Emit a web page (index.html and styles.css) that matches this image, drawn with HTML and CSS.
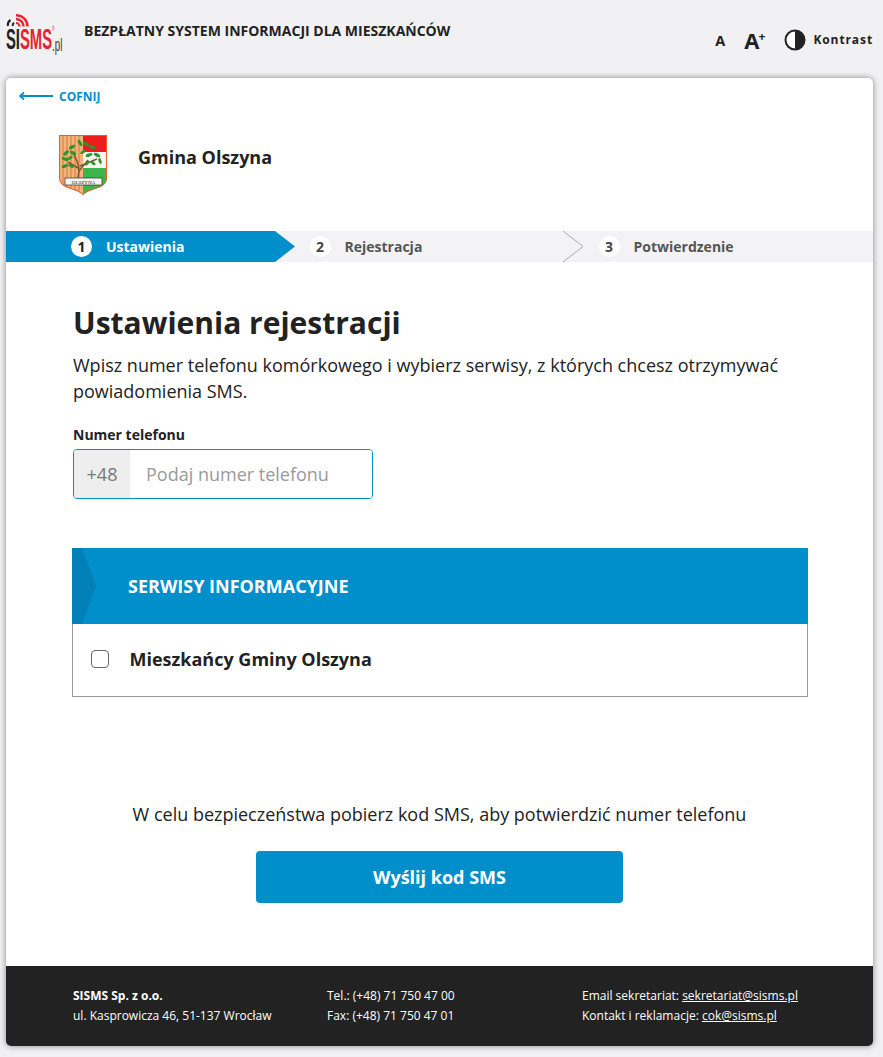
FILE: index.html
```html
<!DOCTYPE html>
<html lang="pl">
<head>
<meta charset="utf-8">
<title>SISMS</title>
<link rel="stylesheet" href="styles.css">
</head>
<body>
<header class="top">
  <div class="logo">
    <svg class="logo-waves" width="24" height="13" viewBox="0 0 24 13">
      <path d="M10 1.200A11 11 0 0 1 21.500 12.500" fill="none" stroke="#e5262e" stroke-width="2.400"/>
      <path d="M10 5A7.500 7.500 0 0 1 17.500 12.500" fill="none" stroke="#e5262e" stroke-width="2.400"/>
      <path d="M10 9A3.500 3.500 0 0 1 13.500 12.500" fill="none" stroke="#e5262e" stroke-width="2.200"/>
      <path d="M2 12A6 6 0 0 1 4.500 6" fill="none" stroke="#222" stroke-width="2.200"/>
      <path d="M6.800 12A3 3 0 0 1 8 8.800" fill="none" stroke="#222" stroke-width="2"/>
    </svg>
    <div class="logo-text"><span class="logo-si">SI</span><span class="logo-sms">SMS<sup class="logo-r">®</sup></span><span class="logo-pl">.pl</span></div>
  </div>
  <div class="top-title">BEZPŁATNY SYSTEM INFORMACJI DLA MIESZKAŃCÓW</div>
  <div class="tools">
    <span class="font-a">A</span>
    <span class="font-b">A<sup>+</sup></span>
    <svg class="contrast" width="22" height="22" viewBox="0 0 22 22">
      <circle cx="11" cy="11" r="9.500" fill="#fff" stroke="#222" stroke-width="2"/>
      <path d="M11 1.500A9.500 9.500 0 0 1 11 20.500Z" fill="#222"/>
    </svg>
    <span class="contrast-label">Kontrast</span>
  </div>
</header>

<main class="card">
  <a class="back" href="#">
    <svg width="34" height="8" viewBox="0 0 34 8"><path d="M34 4H1.500M5 .6 1.200 4 5 7.400" fill="none" stroke="#008fcb" stroke-width="2"/></svg>
    COFNIJ
  </a>
  <div class="org">
    <svg class="crest" width="48" height="60" viewBox="0 0 48 60">
      <defs><clipPath id="sh"><path d="M0 0H48V43Q48 51 36 54Q28 56 24 60Q20 56 12 54Q0 51 0 43Z"/></clipPath></defs>
      <g clip-path="url(#sh)">
        <rect width="24" height="60" fill="#f3b27a"/>
        <path d="M4 0V60M8 0V60M12 0V60M16 0V60M20 0V60" stroke="#d98a48" stroke-width="1.300"/>
        <rect x="24" width="24" height="17" fill="#ee1c1c"/>
        <rect x="24" y="17" width="24" height="16" fill="#f4f4f0"/>
        <rect x="24" y="33" width="24" height="27" fill="#3cb54a"/>
        <path d="M19 43C21 35 20 28 15 20M19 33 9 27M20 36 29 25M21 31 38 24" fill="none" stroke="#7a5a34" stroke-width="1.500"/>
        <g fill="#2c962c">
          <ellipse cx="13" cy="12" rx="3.500" ry="1.600" transform="rotate(-30 13 12)"/>
          <ellipse cx="7" cy="18" rx="3.500" ry="1.600" transform="rotate(-40 7 18)"/>
          <ellipse cx="14" cy="18" rx="3.500" ry="1.600" transform="rotate(30 14 18)"/>
          <ellipse cx="6" cy="24" rx="3.500" ry="1.600" transform="rotate(20 6 24)"/>
          <ellipse cx="11" cy="23" rx="3" ry="1.500" transform="rotate(-30 11 23)"/>
          <ellipse cx="6" cy="31" rx="3.500" ry="1.600" transform="rotate(-20 6 31)"/>
          <ellipse cx="12" cy="31" rx="3" ry="1.500" transform="rotate(30 12 31)"/>
          <ellipse cx="21" cy="8" rx="3.500" ry="1.600" transform="rotate(60 21 8)"/>
          <ellipse cx="27" cy="9" rx="3.500" ry="1.600" transform="rotate(30 27 9)"/>
          <ellipse cx="33" cy="12" rx="3.500" ry="1.600" transform="rotate(20 33 12)"/>
          <ellipse cx="24" cy="17" rx="3" ry="1.500" transform="rotate(-30 24 17)"/>
          <ellipse cx="30" cy="20" rx="3.500" ry="1.600" transform="rotate(-20 30 20)"/>
          <ellipse cx="38" cy="20" rx="3.500" ry="1.600" transform="rotate(30 38 20)"/>
          <ellipse cx="41" cy="26" rx="3" ry="1.500" transform="rotate(70 41 26)"/>
          <ellipse cx="28" cy="28" rx="3" ry="1.500" transform="rotate(-50 28 28)"/>
          <ellipse cx="34" cy="28" rx="3" ry="1.500" transform="rotate(40 34 28)"/>
        </g>
        <rect x="6" y="43" width="37" height="7" fill="#f4f4f0" stroke="#333" stroke-width=".7"/>
        <text x="24.500" y="49" font-size="5" text-anchor="middle" fill="#222" class="crest-text">OLSZYNA</text>
      </g>
      <path d="M.5 .5H47.500V43Q47.500 50.500 36 53.500Q28 55.500 24 59.400Q20 55.500 12 53.500Q.5 50.500 .5 43Z" fill="none" stroke="#ef5a2a"/>
    </svg>
    <div class="org-name">Gmina Olszyna</div>
  </div>

  <ol class="steps">
    <li class="step step-active">
      <span class="num">1</span><span>Ustawienia</span>
      <svg class="arrow" width="20" height="31" viewBox="0 0 20 31"><path d="M0 0 20 15.500 0 31Z" fill="#008fcb"/></svg>
    </li>
    <li class="step">
      <span class="num">2</span><span>Rejestracja</span>
      <svg class="arrow" width="21" height="31" viewBox="0 0 21 31"><path d="M0 0 20 15.500 0 31" fill="none" stroke="#aaa"/></svg>
    </li>
    <li class="step">
      <span class="num">3</span><span>Potwierdzenie</span>
    </li>
  </ol>

  <section class="form">
    <h1>Ustawienia rejestracji</h1>
    <p class="lead">Wpisz numer telefonu komórkowego i wybierz serwisy, z których chcesz otrzymywać powiadomienia SMS.</p>
    <label class="field-label" for="tel">Numer telefonu</label>
    <div class="phone">
      <span class="prefix">+48</span>
      <input id="tel" type="text" placeholder="Podaj numer telefonu">
    </div>

    <div class="panel">
      <div class="panel-head">
        <svg class="panel-mark" width="24" height="76" viewBox="0 0 24 76"><path d="M0 0H10L24 38 10 76H0Z" fill="#0080b6"/></svg>
        <h2>SERWISY INFORMACYJNE</h2>
      </div>
      <label class="panel-row">
        <input type="checkbox">
        <span>Mieszkańcy Gminy Olszyna</span>
      </label>
    </div>

    <p class="notice">W celu bezpieczeństwa pobierz kod SMS, aby potwierdzić numer telefonu</p>
    <button class="send" type="button">Wyślij kod SMS</button>
  </section>

  <footer class="foot">
    <div>
      <div><b>SISMS Sp. z o.o.</b></div>
      <div>ul. Kasprowicza 46, 51-137 Wrocław</div>
    </div>
    <div>
      <div>Tel.: (+48) 71 750 47 00</div>
      <div>Fax: (+48) 71 750 47 01</div>
    </div>
    <div>
      <div>Email sekretariat: <a href="#">sekretariat@sisms.pl</a></div>
      <div>Kontakt i reklamacje: <a href="#">cok@sisms.pl</a></div>
    </div>
  </footer>
</main>
</body>
</html>
```
FILE: styles.css
```css
* { box-sizing: border-box; }
html, body { margin: 0; padding: 0; }
body {
  background: #f1f1f4;
  font-family: "Open Sans", "Liberation Sans", sans-serif;
  color: #222;
  padding-bottom: 11px;
}
.top {
  height: 78px;
  display: flex;
  align-items: flex-start;
  padding-left: 6px;
  position: relative;
}
.logo { width: 56px; padding-top: 14px; flex: none; }
.logo-waves { display: block; }
.logo-text {
  font-family: "Liberation Sans", sans-serif;
  font-weight: 700;
  font-size: 29px;
  line-height: 24px;
  white-space: nowrap;
  transform: scaleX(.51);
  transform-origin: left top;
  width: 110px;
}
.logo-si { color: #222; }
.logo-sms { color: #e5262e; }
.logo-r { font-size: 7px; line-height: 0; vertical-align: 18px; font-weight: 400; margin-right: -5px; }
.logo-pl { color: #333; font-size: 19px; font-weight: 400; position: relative; top: 2px; }
.top-title {
  margin-left: 22px;
  padding-top: 21px;
  font-size: 14px;
  line-height: 20px;
  font-weight: 700;
  white-space: nowrap;
}
.tools {
  margin-left: auto;
  padding: 29px 10px 0 0;
  display: flex;
  align-items: center;
  height: 51px;
}
.font-a { font-size: 14.500px; font-weight: 700; margin-right: 19px; }
.font-b { font-size: 22px; font-weight: 700; margin-right: 19px; line-height: 22px; }
.font-b sup { font-size: 12px; line-height: 0; vertical-align: 8px; margin-left: -1px; }
.contrast { margin-right: 7px; }
.contrast-label { font-size: 12px; font-weight: 700; letter-spacing: .9px; position: relative; top: -1px; }

.card {
  margin: 0 10px 0 6px;
  background: #fff;
  border-radius: 5px;
  box-shadow: 0 0 6px rgba(0, 0, 0, .45);
  overflow: hidden;
}
.back {
  display: flex;
  align-items: center;
  gap: 6px;
  padding: 9px 0 0 13px;
  height: 27px;
  color: #008fcb;
  font-size: 12px;
  font-weight: 700;
  text-decoration: none;
}
.org {
  display: flex;
  padding: 30px 0 0 53px;
  height: 126px;
  align-items: flex-start;
}
.crest { display: block; flex: none; }
.crest-text { font-family: "Liberation Serif", serif; }
.org-name { margin: 9px 0 0 31px; font-size: 18px; line-height: 26px; font-weight: 700; }

.steps {
  list-style: none;
  margin: 0;
  padding: 0;
  display: grid;
  grid-template-columns: repeat(3, 1fr);
  background: #f3f3f5;
  height: 31px;
}
.step {
  position: relative;
  display: flex;
  align-items: center;
  gap: 14px;
  padding-left: 14.500px;
  font-size: 14px;
  font-weight: 700;
  color: #555;
}
.num {
  width: 21px;
  height: 21px;
  border-radius: 50%;
  background: #fff;
  display: flex;
  align-items: center;
  justify-content: center;
  color: #444;
  flex: none;
}
.step-active {
  background: #008fcb;
  color: #fff;
  padding-left: 65px;
  margin-right: 20px;
}
.step-active .num { color: #222; }
.arrow { position: absolute; top: 0; right: 0; }
.step-active .arrow { right: -20px; }

.form { padding: 0 67px 63px; }
h1 {
  margin: 41px 0 0;
  font-size: 30px;
  line-height: 40px;
  font-weight: 700;
}
.lead {
  margin: 9px 0 0;
  font-size: 18px;
  line-height: 26px;
  max-width: 730px;
}
.field-label {
  display: block;
  margin-top: 21px;
  font-size: 14px;
  line-height: 20px;
  font-weight: 700;
}
.phone {
  margin-top: 4px;
  width: 300px;
  height: 50px;
  border: 1px solid #008fcb;
  border-radius: 4px;
  display: flex;
  overflow: hidden;
}
.prefix {
  width: 56px;
  background: #eee;
  color: #777;
  font-size: 18px;
  display: flex;
  align-items: center;
  justify-content: center;
  flex: none;
}
.phone input {
  flex: 1;
  min-width: 0;
  border: 0;
  outline: 0;
  padding: 0 0 0 16px;
  font: 18px "Open Sans", sans-serif;
}
.phone input::placeholder { color: #999; opacity: 1; }

.panel {
  margin: 49px -2px 0 -1px;
  border: 1px solid #999;
  border-top: 0;
}
.panel-head {
  margin: 0 -1px;
  height: 76px;
  background: #008fcb;
  color: #fff;
  display: flex;
  align-items: center;
  padding-left: 56px;
  position: relative;
}
.panel-mark { position: absolute; left: 0; top: 0; }
.panel-head h2 { margin: 0; font-size: 18px; font-weight: 700; }
.panel-row {
  height: 72px;
  display: flex;
  align-items: center;
  padding-left: 18px;
  padding-bottom: 2px;
  font-size: 18px;
  font-weight: 700;
}
.panel-row input {
  appearance: none;
  width: 18px;
  height: 18px;
  margin: 0 20.500px 0 0;
  border: 1px solid #666;
  border-radius: 4px;
  background: #fff;
}
.notice {
  margin: 104px 0 0;
  text-align: center;
  font-size: 18px;
  line-height: 26px;
}
.send {
  display: block;
  margin: 24px auto 0;
  width: 367px;
  height: 52px;
  border: 0;
  border-radius: 4px;
  background: #008fcb;
  color: #fff;
  font: 700 18px "Open Sans", sans-serif;
}
.foot {
  height: 80px;
  background: #222;
  color: #fff;
  padding: 20px 0 0 67px;
  display: grid;
  grid-template-columns: 254px 255px 1fr;
  font-size: 12px;
  line-height: 20px;
}
.foot a { color: #fff; }
```
